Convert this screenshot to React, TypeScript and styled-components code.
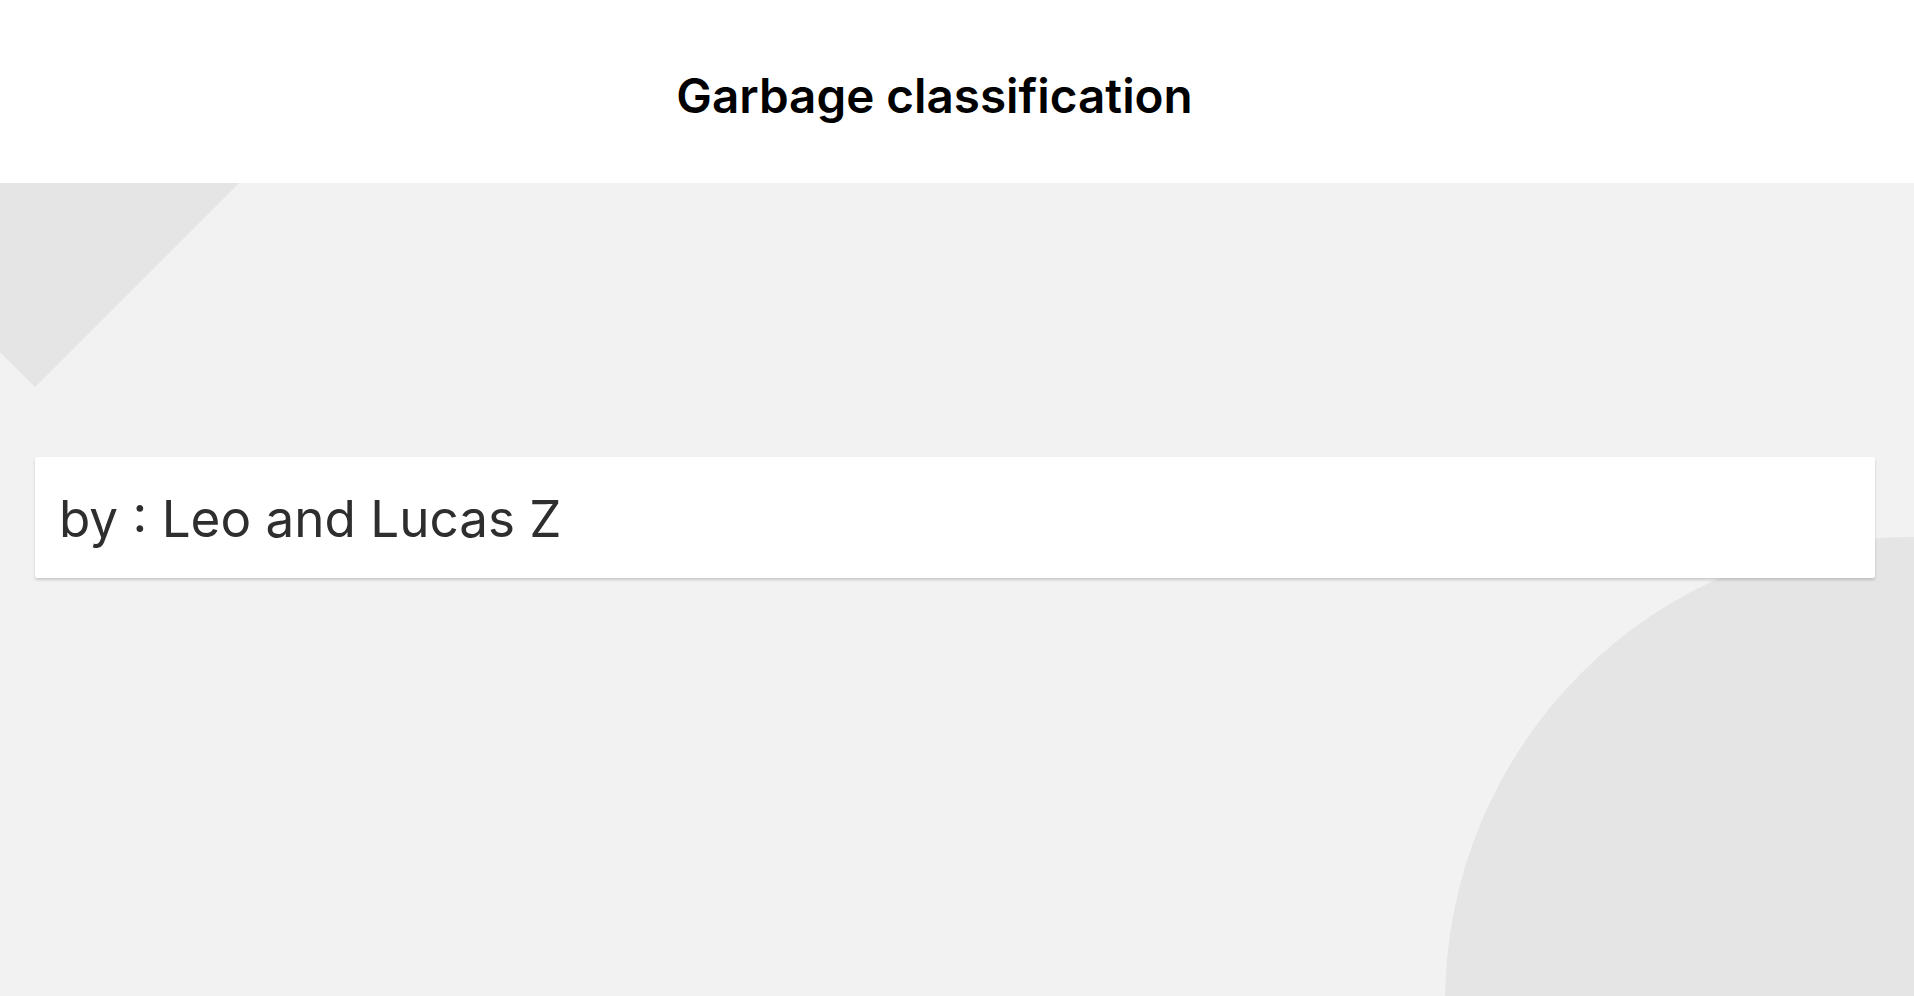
import React from "react";
import styled, { createGlobalStyle } from "styled-components";

const GlobalStyle = createGlobalStyle`
  * { box-sizing: border-box; }
  html, body { margin: 0; padding: 0; }
  body {
    background: #f2f2f2;
    font-family: "Inter", "Noto Sans", sans-serif;
    overflow: hidden;
  }
`;

const Page = styled.div`
  position: relative;
  min-height: 100vh;
  overflow: hidden;
  background: #f2f2f2;
  display: flex;
  flex-direction: column;
`;

const Diamond = styled.div`
  position: absolute;
  width: 300px;
  height: 300px;
  left: -115px;
  top: 25px;
  background: #e5e5e5;
  transform: rotate(45deg);
  z-index: 0;
`;

const Circle = styled.div`
  position: absolute;
  width: 930px;
  height: 930px;
  left: 1445px;
  top: 537px;
  border-radius: 50%;
  background: #e5e5e5;
  z-index: 0;
`;

const Header = styled.header`
  position: relative;
  z-index: 1;
  height: 183px;
  background: #ffffff;
  display: flex;
  justify-content: center;
  align-items: flex-start;
  padding: 67px 45px 0 0;
`;

const Title = styled.h1`
  margin: 0;
  font-family: "Inter", "Noto Sans", sans-serif;
  font-weight: 600;
  font-size: 47.6px;
  line-height: 57px;
  letter-spacing: 0;
  color: #000000;
`;

const Main = styled.main`
  position: relative;
  z-index: 1;
  padding: 274px 39px 0 35px;
`;

const Card = styled.section`
  height: 121px;
  background: #ffffff;
  border-radius: 2px;
  box-shadow: 0 2px 3px rgba(0, 0, 0, 0.16);
  display: flex;
  align-items: center;
  padding: 0 24px;
`;

const Byline = styled.p`
  margin: 0;
  font-family: "Inter", "Noto Sans", sans-serif;
  font-weight: 400;
  font-size: 51.2px;
  line-height: 62px;
  color: #2e2e2e;
`;

export default function App() {
  return (
    <>
      <GlobalStyle />
      <Page>
        <Diamond />
        <Circle />
        <Header>
          <Title>Garbage classification</Title>
        </Header>
        <Main>
          <Card>
            <Byline>by : Leo and Lucas Z</Byline>
          </Card>
        </Main>
      </Page>
    </>
  );
}
